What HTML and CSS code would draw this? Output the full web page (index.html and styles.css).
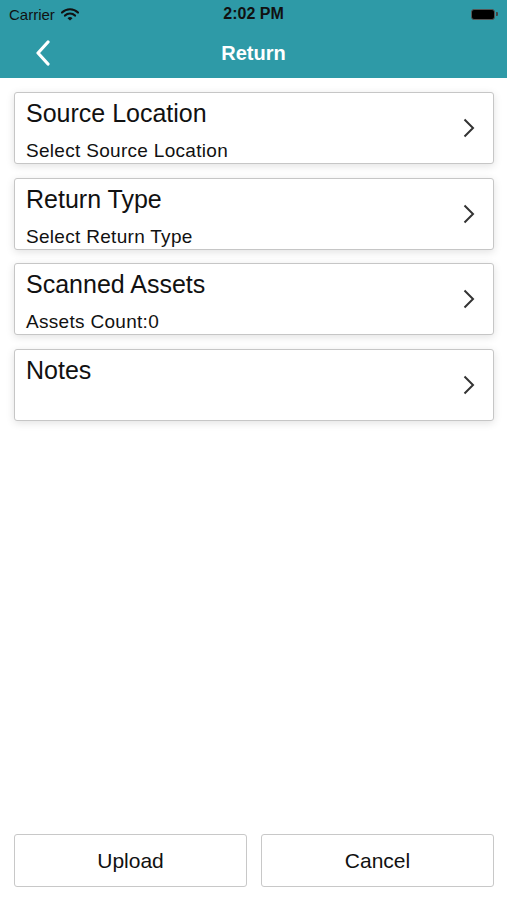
FILE: index.html
```html
<!DOCTYPE html>
<html>
<head>
    <title>Return</title>
    <link rel="stylesheet" href="styles.css">
</head>
<body>
    <div class="header">
        <div class="status-bar">
            <div class="carrier">
                Carrier
                <svg class="wifi" width="18" height="13" viewBox="0 0 18 13">
                    <path d="M1 4.5 A11.5 11.5 0 0 1 17 4.5" fill="none" stroke="#111" stroke-width="2.2" stroke-linecap="round"/>
                    <path d="M4 7.6 A7 7 0 0 1 14 7.6" fill="none" stroke="#111" stroke-width="2.2" stroke-linecap="round"/>
                    <path d="M9 12.6 L6.5 10.2 A3.6 3.6 0 0 1 11.5 10.2 Z" fill="#111"/>
                </svg>
            </div>
            <div class="clock">2:02 PM</div>
            <div class="battery">
                <div class="battery-body"></div>
                <div class="battery-nub"></div>
            </div>
        </div>
        <div class="nav-bar">
            <svg class="back" width="16" height="26" viewBox="0 0 16 26">
                <path d="M13 2 L3 13 L13 24" fill="none" stroke="#fff" stroke-width="3.2" stroke-linecap="round" stroke-linejoin="round"/>
            </svg>
            <div class="nav-title">Return</div>
        </div>
    </div>

    <div class="content">
        <div class="card">
            <div class="card-text">
                <div class="card-title">Source Location</div>
                <div class="card-sub">Select Source Location</div>
            </div>
            <svg class="chevron" width="12" height="20" viewBox="0 0 12 20"><path d="M1.5 1.5 L10 10 L1.5 18.5" fill="none" stroke="#333" stroke-width="2"/></svg>
        </div>
        <div class="card">
            <div class="card-text">
                <div class="card-title">Return Type</div>
                <div class="card-sub">Select Return Type</div>
            </div>
            <svg class="chevron" width="12" height="20" viewBox="0 0 12 20"><path d="M1.5 1.5 L10 10 L1.5 18.5" fill="none" stroke="#333" stroke-width="2"/></svg>
        </div>
        <div class="card">
            <div class="card-text">
                <div class="card-title">Scanned Assets</div>
                <div class="card-sub">Assets Count:0</div>
            </div>
            <svg class="chevron" width="12" height="20" viewBox="0 0 12 20"><path d="M1.5 1.5 L10 10 L1.5 18.5" fill="none" stroke="#333" stroke-width="2"/></svg>
        </div>
        <div class="card">
            <div class="card-text">
                <div class="card-title">Notes</div>
            </div>
            <svg class="chevron" width="12" height="20" viewBox="0 0 12 20"><path d="M1.5 1.5 L10 10 L1.5 18.5" fill="none" stroke="#333" stroke-width="2"/></svg>
        </div>
    </div>

    <div class="actions">
        <button class="action">Upload</button>
        <button class="action">Cancel</button>
    </div>
</body>
</html>
```

FILE: styles.css
```css
body {
    margin: 0;
    height: 900px;
    display: flex;
    flex-direction: column;
    font-family: 'Liberation Sans', Arial, sans-serif;
    background: #ffffff;
    color: #111;
}
.header {
    background: #2e9aa7;
    height: 78px;
}
.status-bar {
    height: 28px;
    display: flex;
    align-items: center;
    justify-content: space-between;
    padding: 0 9px;
    font-size: 15px;
    color: #111;
}
.carrier {
    display: flex;
    align-items: center;
    gap: 6px;
    width: 120px;
}
.clock {
    font-weight: bold;
    font-size: 16px;
}
.battery {
    width: 120px;
    display: flex;
    justify-content: flex-end;
    align-items: center;
}
.battery-body {
    width: 22px;
    height: 9px;
    background: #000;
    border: 1px solid #555;
    border-radius: 3px;
}
.battery-nub {
    width: 2px;
    height: 4px;
    background: #444;
    border-radius: 0 1px 1px 0;
    margin-left: 1px;
}
.nav-bar {
    height: 50px;
    display: flex;
    align-items: center;
    justify-content: center;
    position: relative;
}
.back {
    position: absolute;
    left: 35px;
    top: 12px;
}
.nav-title {
    color: #fff;
    font-size: 20px;
    font-weight: bold;
}
.content {
    padding: 14px 13px 0 14px;
    display: flex;
    flex-direction: column;
    gap: 13.5px;
}
.card {
    height: 72px;
    box-sizing: border-box;
    border: 1px solid #c6c6c6;
    border-radius: 3px;
    background: #fff;
    box-shadow: 0 2px 8px rgba(0,0,0,0.12);
    display: flex;
    align-items: center;
    padding: 0 18px 0 11px;
}
.card-text {
    flex: 1;
    align-self: flex-start;
    padding-top: 5px;
}
.card-title {
    font-size: 25px;
    line-height: 30px;
}
.card-sub {
    font-size: 19px;
    line-height: 22px;
    letter-spacing: 0.3px;
    margin-top: 12px;
}
.chevron {
    display: block;
}
.actions {
    margin-top: auto;
    display: flex;
    gap: 14px;
    padding: 0 13px 13px 14px;
}
.action {
    flex: 1;
    height: 53px;
    background: #fff;
    border: 1.5px solid #c8c8c8;
    border-radius: 3px;
    font-family: 'Liberation Sans', Arial, sans-serif;
    font-size: 21px;
    color: #111;
}
```
